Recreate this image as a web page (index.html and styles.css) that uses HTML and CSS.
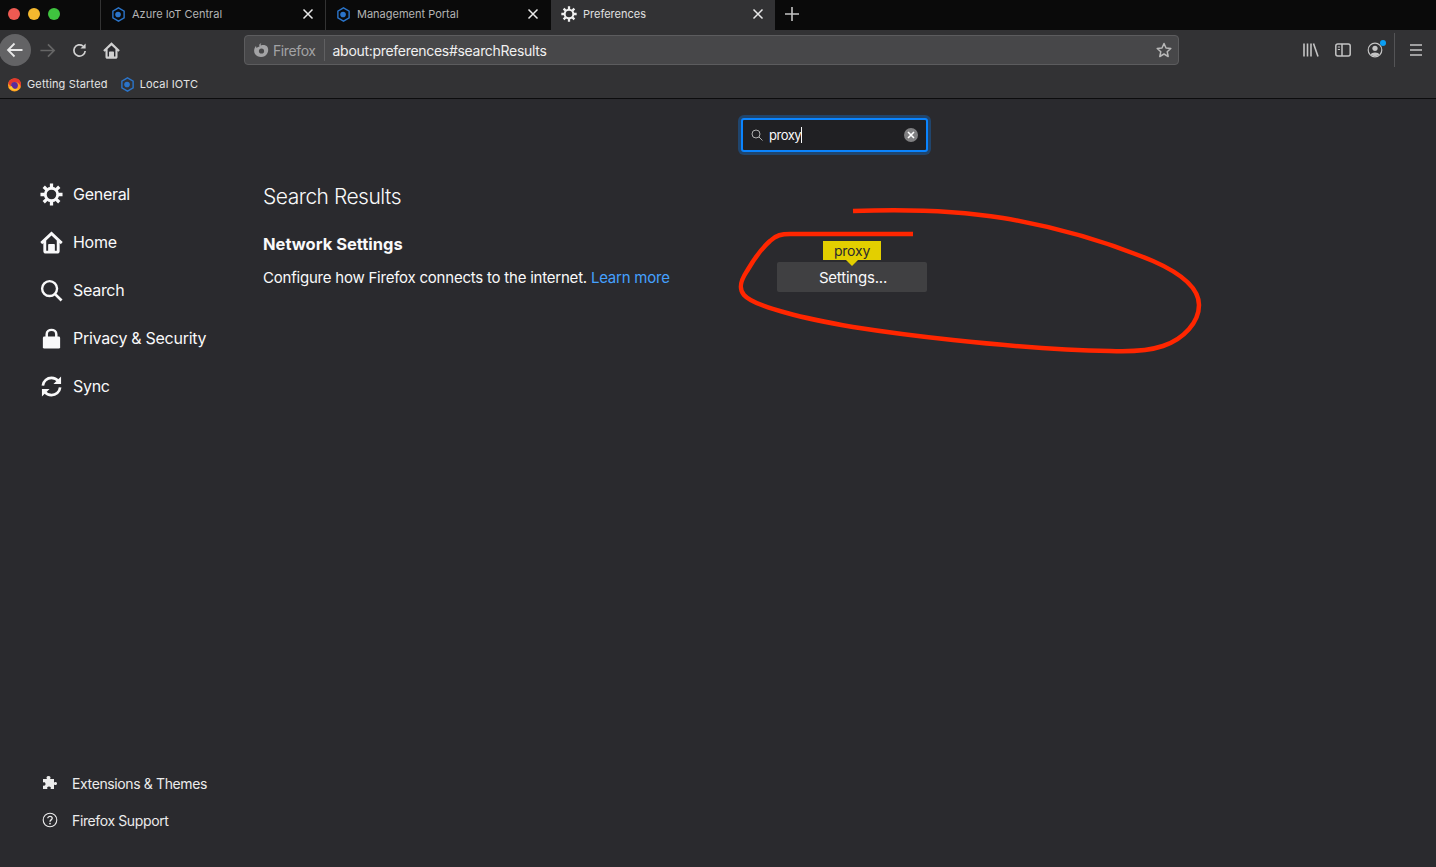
FILE: index.html
```html
<!DOCTYPE html>
<html lang="en">
<head>
    <meta charset="UTF-8">
    <title>Preferences</title>
    <link rel="stylesheet" href="styles.css">
</head>
<body>
    <svg width="0" height="0" class="defs">
        <defs>
            <symbol id="hex" viewBox="0 0 16 16">
                <path d="M8 1 14 4.500V11.500L8 15 2 11.500V4.500Z" fill="none" stroke="#2b74c9" stroke-width="1.500"/>
                <circle cx="7.500" cy="8" r="3" fill="#2b74c9"/>
            </symbol>
            <symbol id="gear" viewBox="0 0 24 24">
                <circle cx="12" cy="12" r="6.500" fill="none" stroke="currentColor" stroke-width="3"/>
                <g stroke="currentColor" stroke-width="3.400">
                    <path d="M12 0.500V5M12 19V23.500M0.500 12H5M19 12H23.500M3.900 3.900 7 7M17 17 20.100 20.100M3.900 20.100 7 17M17 7 20.100 3.900"/>
                </g>
            </symbol>
            <symbol id="home" viewBox="0 0 24 24">
                <path d="M12 0.500 0.300 11.500 2.300 13.700 3.500 12.600V21C3.500 22.600 4.600 23.500 6 23.500H18C19.400 23.500 20.500 22.600 20.500 21V12.600L21.700 13.700 23.700 11.500Z" fill="currentColor"/>
                <path d="M12 4.800 17.500 10V20.500H15.500V14.500C15.500 13.800 15 13.500 14.500 13.500H9.500C9 13.500 8.500 13.800 8.500 14.500V20.500H6.500V10Z" fill="#2a2a2e"/>
                <rect x="11" y="16" width="2" height="2" fill="currentColor"/>
            </symbol>
            <symbol id="close" viewBox="0 0 12 12">
                <path d="M1.500 1.500 10.500 10.500M10.500 1.500 1.500 10.500" stroke="currentColor" stroke-width="1.500" fill="none"/>
            </symbol>
            <symbol id="fox" viewBox="0 0 16 16">
                <circle cx="8" cy="8.500" r="7" fill="#ff9a1f"/>
                <path d="M1.500 6C3 1.500 9 0 12.500 2.500 15 4.500 15.500 8 14.500 10.500 13.500 6 10 4.500 7 5.500 5 6 4 8 5 9.500 3 9.500 2 8 1.500 6Z" fill="#e5372e"/>
                <circle cx="8" cy="9" r="3.600" fill="#5b2a9d"/>
                <path d="M2 11C4 14.500 9 15.500 12.500 13 9.500 13.500 6 12.800 5 9.500 4 10.500 3 11 2 11Z" fill="#ffcb2f"/>
            </symbol>
        </defs>
    </svg>

    <div class="tabstrip">
        <div class="lights">
            <span class="light red"></span>
            <span class="light yellow"></span>
            <span class="light green"></span>
        </div>
        <div class="tab">
            <svg class="tab-icon"><use href="#hex"/></svg>
            <span class="tab-title">Azure IoT Central</span>
            <svg class="tab-close"><use href="#close"/></svg>
        </div>
        <div class="tab">
            <svg class="tab-icon"><use href="#hex"/></svg>
            <span class="tab-title">Management Portal</span>
            <svg class="tab-close"><use href="#close"/></svg>
        </div>
        <div class="tab active">
            <svg class="tab-icon"><use href="#gear"/></svg>
            <span class="tab-title">Preferences</span>
            <svg class="tab-close"><use href="#close"/></svg>
        </div>
        <svg class="new-tab" viewBox="0 0 14 14"><path d="M7 0V14M0 7H14" stroke="#c4c4c4" stroke-width="1.600"/></svg>
    </div>

    <div class="navbar">
        <div class="back-btn">
            <svg viewBox="0 0 18 18" width="18" height="18"><path d="M16.500 9H2M8.500 2.500 2 9 8.500 15.500" fill="none" stroke="#e8e8e8" stroke-width="1.800"/></svg>
        </div>
        <svg class="nav-icon forward" viewBox="0 0 18 18"><path d="M1.500 9H16M9.500 2.500 16 9 9.500 15.500" fill="none" stroke="#666" stroke-width="1.800"/></svg>
        <svg class="nav-icon" viewBox="0 0 18 18"><path d="M15 9.500A6 6 0 1 1 12.800 4.300" fill="none" stroke="#d0d0d0" stroke-width="1.800"/><path d="M15.500 1.500V7H10Z" fill="#d0d0d0"/></svg>
        <svg class="nav-icon home-icon"><use href="#home"/></svg>
        <div class="urlbar">
            <div class="identity">
                <svg viewBox="0 0 16 16" width="16" height="16"><path d="M8.500 1C7.500 2 7.500 3 8 3.500 10 2.500 13 3 14.500 5 16 8 15 12 12 14 8.500 16 4 15 2 12 0.500 9.500 1 6 3 4L3.500 6C4.500 5 5.500 4.500 6.500 4.500 5.800 3 6.500 1.500 8.500 1Z" fill="#a3a3a5"/><circle cx="8.500" cy="9" r="2.600" fill="#474749"/></svg>
                <span>Firefox</span>
            </div>
            <span class="url">about:preferences#searchResults</span>
            <svg class="star" viewBox="0 0 16 16"><path d="M8 1.500 10 6 14.800 6.500 11.200 9.700 12.200 14.500 8 12 3.800 14.500 4.800 9.700 1.200 6.500 6 6Z" fill="none" stroke="#b8b8b8" stroke-width="1.500" stroke-linejoin="round"/></svg>
        </div>
        <div class="toolbar-right">
            <svg class="tool-icon" viewBox="0 0 16 16"><path d="M1 1.500V14.500M4.500 1.500V14.500M8 1.500V14.500M10.500 1.500 15 14.500" stroke="#c4c4c4" stroke-width="1.600" fill="none"/></svg>
            <svg class="tool-icon" viewBox="0 0 16 16"><rect x="0.800" y="2" width="14.400" height="12" rx="2" fill="none" stroke="#c4c4c4" stroke-width="1.500"/><path d="M7 2V14" stroke="#c4c4c4" stroke-width="1.500"/><path d="M2.800 5H5M2.800 7.500H5" stroke="#c4c4c4"/></svg>
            <div class="account">
                <svg class="tool-icon" viewBox="0 0 16 16"><circle cx="8" cy="8" r="6.800" fill="none" stroke="#c4c4c4" stroke-width="1.200"/><circle cx="8" cy="6.300" r="2.600" fill="#c4c4c4"/><path d="M3.500 12.500C4.500 9.800 11.500 9.800 12.500 12.500 10 14.500 6 14.500 3.500 12.500Z" fill="#c4c4c4"/></svg>
                <span class="badge"></span>
            </div>
            <span class="tool-sep"></span>
            <svg class="tool-icon menu-icon" viewBox="0 0 14 14"><path d="M1 2H13M1 7H13M1 12H13" stroke="#c4c4c4" stroke-width="1.500"/></svg>
        </div>
    </div>

    <div class="bookmarks">
        <div class="bookmark">
            <svg class="bookmark-icon"><use href="#fox"/></svg>
            <span>Getting Started</span>
        </div>
        <div class="bookmark">
            <svg class="bookmark-icon"><use href="#hex"/></svg>
            <span>Local IOTC</span>
        </div>
    </div>

    <div class="page">
        <nav class="sidebar">
            <div class="categories">
                <a class="category">
                    <svg class="cat-icon"><use href="#gear"/></svg>General
                </a>
                <a class="category">
                    <svg class="cat-icon"><use href="#home"/></svg>Home
                </a>
                <a class="category">
                    <svg class="cat-icon" viewBox="0 0 24 24"><circle cx="10" cy="10" r="7.800" fill="none" stroke="currentColor" stroke-width="2.500"/><path d="M15.500 15.500 22.500 22.500" stroke="currentColor" stroke-width="2.800"/></svg>Search
                </a>
                <a class="category">
                    <svg class="cat-icon" viewBox="0 0 24 24"><path d="M7 11V7.500C7 1.500 17 1.500 17 7.500V11" fill="none" stroke="currentColor" stroke-width="2.600"/><rect x="3" y="10" width="18" height="12.500" rx="1.500" fill="currentColor"/></svg>Privacy &amp; Security
                </a>
                <a class="category">
                    <svg class="cat-icon" viewBox="0 0 24 24"><path d="M3 11C3.500 6 7.500 3 12 3 15 3 17.500 4.300 19.200 6.500" fill="none" stroke="currentColor" stroke-width="2.800"/><path d="M22 1.500V9.500H14Z" fill="currentColor"/><path d="M21 13C20.500 18 16.500 21 12 21 9 21 6.500 19.700 4.800 17.500" fill="none" stroke="currentColor" stroke-width="2.800"/><path d="M2 22.500V14.500H10Z" fill="currentColor"/></svg>Sync
                </a>
            </div>
            <div class="sidebar-footer">
                <a class="footer-link">
                    <svg class="footer-icon" viewBox="0 0 16 16"><path d="M1 4H5C4 2.500 4.500 1 6.500 1S9 2.500 8 4H12V7.500C13.500 6.500 15 7 15 8.500S13.500 10.500 12 9.500V14H8.500C9.500 12.500 8.500 11.500 7 11.500S4.500 12.500 5.500 14H1V10.500C2.500 11 3.500 10.500 3.500 9S2.500 7 1 7.500Z" fill="currentColor"/></svg>Extensions &amp; Themes
                </a>
                <a class="footer-link">
                    <svg class="footer-icon" viewBox="0 0 16 16"><circle cx="8" cy="8" r="6.800" fill="none" stroke="currentColor" stroke-width="1.100"/><path d="M5.800 6.300C5.800 3.800 10.200 3.800 10.200 6.300 10.200 7.900 8 7.900 8 9.700" fill="none" stroke="currentColor" stroke-width="1.300"/><circle cx="8" cy="11.600" r="0.900" fill="currentColor"/></svg>Firefox Support
                </a>
            </div>
        </nav>

        <main class="content">
            <div class="search-row">
                <div class="search-box">
                    <svg class="search-icon" viewBox="0 0 12 12"><circle cx="5" cy="5" r="4" fill="none" stroke="#b0b0b0"/><path d="M8 8 11.500 11.500" stroke="#b0b0b0"/></svg>
                    <span class="search-value">proxy</span>
                    <span class="caret"></span>
                    <span class="search-clear">
                        <svg viewBox="0 0 12 12" width="8" height="8"><path d="M1.500 1.500 10.500 10.500M10.500 1.500 1.500 10.500" stroke="#fff" stroke-width="2.400"/></svg>
                    </span>
                </div>
            </div>
            <h1 class="page-title">Search Results</h1>
            <h2 class="group-title">Network Settings</h2>
            <div class="setting-row">
                <p class="setting-desc">Configure how Firefox connects to the internet. <a class="learn-more">Learn more</a></p>
                <button class="settings-btn">
                    <span class="highlight">proxy</span>
                    Settings...
                </button>
            </div>
        </main>
    </div>

    <!-- red pen mark drawn over the screenshot -->
    <svg class="scribble" viewBox="0 0 1436 867">
        <path d="M853 211C905 209 960 211 1003 218 1050 226 1105 241 1153 261 1178 272 1199 287 1199 305 1199 322 1184 339 1163 346 1148 351 1132 352 1110 351 1050 350 1000 345 953 340 915 336 885 332 853 327 830 323 805 318 787 313 768 308 750 302 744 295 738 288 741 280 747 271 754 259 762 248 770 241 776 235 782 234 790 234H913" fill="none" stroke="#ff2600" stroke-width="4.500"/>
    </svg>
</body>
</html>
```

FILE: styles.css
```css
* {
    box-sizing: border-box;
}
html, body {
    height: 100%;
}
body {
    margin: 0;
    background-color: #2a2a2e;
    color: #f9f9fa;
    font-family: Inter, "Liberation Sans", sans-serif;
    display: flex;
    flex-direction: column;
    overflow: hidden;
}
.defs {
    position: absolute;
}

/* Tab strip */
.tabstrip {
    height: 30px;
    background-color: #0a0a0a;
    display: flex;
    align-items: center;
    flex-shrink: 0;
}
.lights {
    width: 100px;
    display: flex;
    gap: 8px;
    padding: 0 0 2px 8px;
}
.light {
    width: 12px;
    height: 12px;
    border-radius: 50%;
}
.red { background-color: #ee5a52; }
.yellow { background-color: #f5b82e; }
.green { background-color: #3fc33f; }
.tab {
    width: 225px;
    height: 30px;
    display: flex;
    align-items: center;
    padding: 0 11px 2px 10px;
    border-left: 1px solid #333;
    color: #b4b4b4;
    font-size: 11px;
}
.tab.active {
    background-color: #323234;
    border-left: 0;
    color: #e0e0e0;
    width: 224px;
    margin-left: 1px;
}
.tab-icon {
    width: 15px;
    height: 15px;
    margin-right: 6px;
    flex-shrink: 0;
}
.tab.active .tab-icon {
    width: 16px;
    height: 16px;
    color: #f0f0f0;
}
.tab-title {
    flex: 1;
}
.tab-close {
    width: 12px;
    height: 12px;
    color: #e8e8e8;
}
.new-tab {
    width: 14px;
    height: 14px;
    margin: -3px 0 0 10px;
}

/* Toolbar */
.navbar {
    height: 38px;
    padding-top: 2px;
    background-color: #323234;
    display: flex;
    align-items: center;
    flex-shrink: 0;
}
.back-btn {
    width: 32px;
    height: 32px;
    margin-left: -1px;
    border-radius: 50%;
    background-color: #636365;
    display: flex;
    align-items: center;
    justify-content: center;
    flex-shrink: 0;
}
.nav-icon {
    width: 17px;
    height: 17px;
    margin-left: 15px;
    flex-shrink: 0;
}
.forward {
    margin-left: 8px;
}
.home-icon {
    color: #d0d0d0;
}
.urlbar {
    width: 935px;
    height: 30px;
    margin-left: 124px;
    background-color: #474749;
    border: 1px solid #5c5c5e;
    border-radius: 4px;
    display: flex;
    align-items: center;
    flex-shrink: 0;
}
.identity {
    display: flex;
    align-items: center;
    gap: 4px;
    padding: 0 8px;
    height: 22px;
    border-right: 1px solid #606062;
    color: #a3a3a5;
    font-size: 14px;
    letter-spacing: -0.4px;
}
.url {
    flex: 1;
    padding-left: 8px;
    font-size: 14px;
    letter-spacing: -0.3px;
    color: #f0f0f0;
}
.star {
    width: 16px;
    height: 16px;
    margin-right: 6px;
}
.toolbar-right {
    display: flex;
    align-items: center;
    margin-left: 124px;
}
.tool-icon {
    width: 16px;
    height: 16px;
    display: block;
}
.toolbar-right > .tool-icon {
    margin-right: 16px;
}
.account {
    position: relative;
    margin-right: 11px;
}
.badge {
    position: absolute;
    top: -2px;
    right: -3px;
    width: 6px;
    height: 6px;
    border-radius: 50%;
    background-color: #0a9ff5;
}
.tool-sep {
    width: 1px;
    height: 34px;
    background-color: #545456;
    margin-right: 14px;
}
.toolbar-right > .menu-icon {
    width: 14px;
    height: 14px;
    margin: 0;
}

/* Bookmarks */
.bookmarks {
    height: 31px;
    padding: 2px 0 0 7px;
    background-color: #323234;
    border-bottom: 1px solid #0c0c0d;
    display: flex;
    align-items: center;
    gap: 12px;
    font-size: 11px;
    letter-spacing: 0.15px;
    color: #e4e4e4;
    flex-shrink: 0;
}
.bookmark {
    display: flex;
    align-items: center;
    gap: 5px;
}
.bookmark-icon {
    width: 15px;
    height: 15px;
}

/* Page */
.page {
    flex: 1;
    display: flex;
    min-height: 0;
}
.sidebar {
    width: 263px;
    flex-shrink: 0;
    display: flex;
    flex-direction: column;
    justify-content: space-between;
    padding: 83px 0 37px 40px;
}
.categories {
    display: flex;
    flex-direction: column;
    gap: 24px;
}
.category {
    display: flex;
    align-items: center;
    gap: 10px;
    height: 24px;
    font-size: 16px;
    letter-spacing: -0.28px;
}
.cat-icon {
    width: 23px;
    height: 23px;
    flex-shrink: 0;
}
.sidebar-footer {
    display: flex;
    flex-direction: column;
    gap: 17px;
}
.footer-link {
    display: flex;
    align-items: center;
    gap: 14px;
    height: 20px;
    padding-left: 2px;
    font-size: 14px;
    letter-spacing: -0.38px;
    color: #ececec;
}
.footer-icon {
    width: 16px;
    height: 16px;
    flex-shrink: 0;
}
.content {
    width: 664px;
    display: flex;
    flex-direction: column;
    padding-top: 19px;
}
.search-row {
    display: flex;
    justify-content: flex-end;
    margin-right: -1px;
}
.search-box {
    width: 187px;
    height: 34px;
    background-color: #202023;
    border: 2px solid #0a84ff;
    box-shadow: 0 0 0 3px rgba(10, 132, 255, 0.3);
    border-radius: 3px;
    display: flex;
    align-items: center;
    padding: 0 8px;
    font-size: 13px;
}
.search-icon {
    width: 12px;
    height: 12px;
    margin-right: 6px;
}
.search-value {
    color: #f9f9fa;
    letter-spacing: -0.5px;
}
.caret {
    width: 1px;
    height: 16px;
    background-color: #f9f9fa;
    flex-shrink: 0;
}
.search-clear {
    width: 14px;
    height: 14px;
    margin-left: auto;
    border-radius: 50%;
    background-color: #808082;
    display: flex;
    align-items: center;
    justify-content: center;
}
.page-title {
    margin: 30px 0 0;
    font-size: 21px;
    font-weight: 300;
    letter-spacing: -0.5px;
    line-height: 30px;
}
.group-title {
    margin: 20px 0 0;
    font-size: 16.5px;
    font-weight: 700;
    line-height: 24px;
}
.setting-row {
    display: flex;
    align-items: center;
    justify-content: space-between;
    margin-top: 6px;
}
.setting-desc {
    margin: 0;
    font-size: 15px;
    letter-spacing: -0.22px;
}
.learn-more {
    color: #45a1ff;
}
.settings-btn {
    position: relative;
    width: 150px;
    height: 30px;
    padding: 0 0 0 2px;
    background-color: #404042;
    color: #f9f9fa;
    border: 0;
    border-radius: 2px;
    font-family: inherit;
    font-size: 15px;
    letter-spacing: -0.2px;
}
.highlight {
    position: absolute;
    left: 46px;
    bottom: 32px;
    width: 58px;
    height: 19px;
    background-color: #e3cf00;
    color: #2a2a2e;
    font-size: 14px;
    letter-spacing: -0.2px;
    line-height: 19px;
    text-align: center;
}
.highlight::after {
    content: "";
    position: absolute;
    left: 23px;
    top: 19px;
    border: 6px solid transparent;
    border-top: 6px solid #e3cf00;
}
.scribble {
    position: absolute;
    top: 0;
    left: 0;
    width: 1436px;
    height: 867px;
    pointer-events: none;
}
```
